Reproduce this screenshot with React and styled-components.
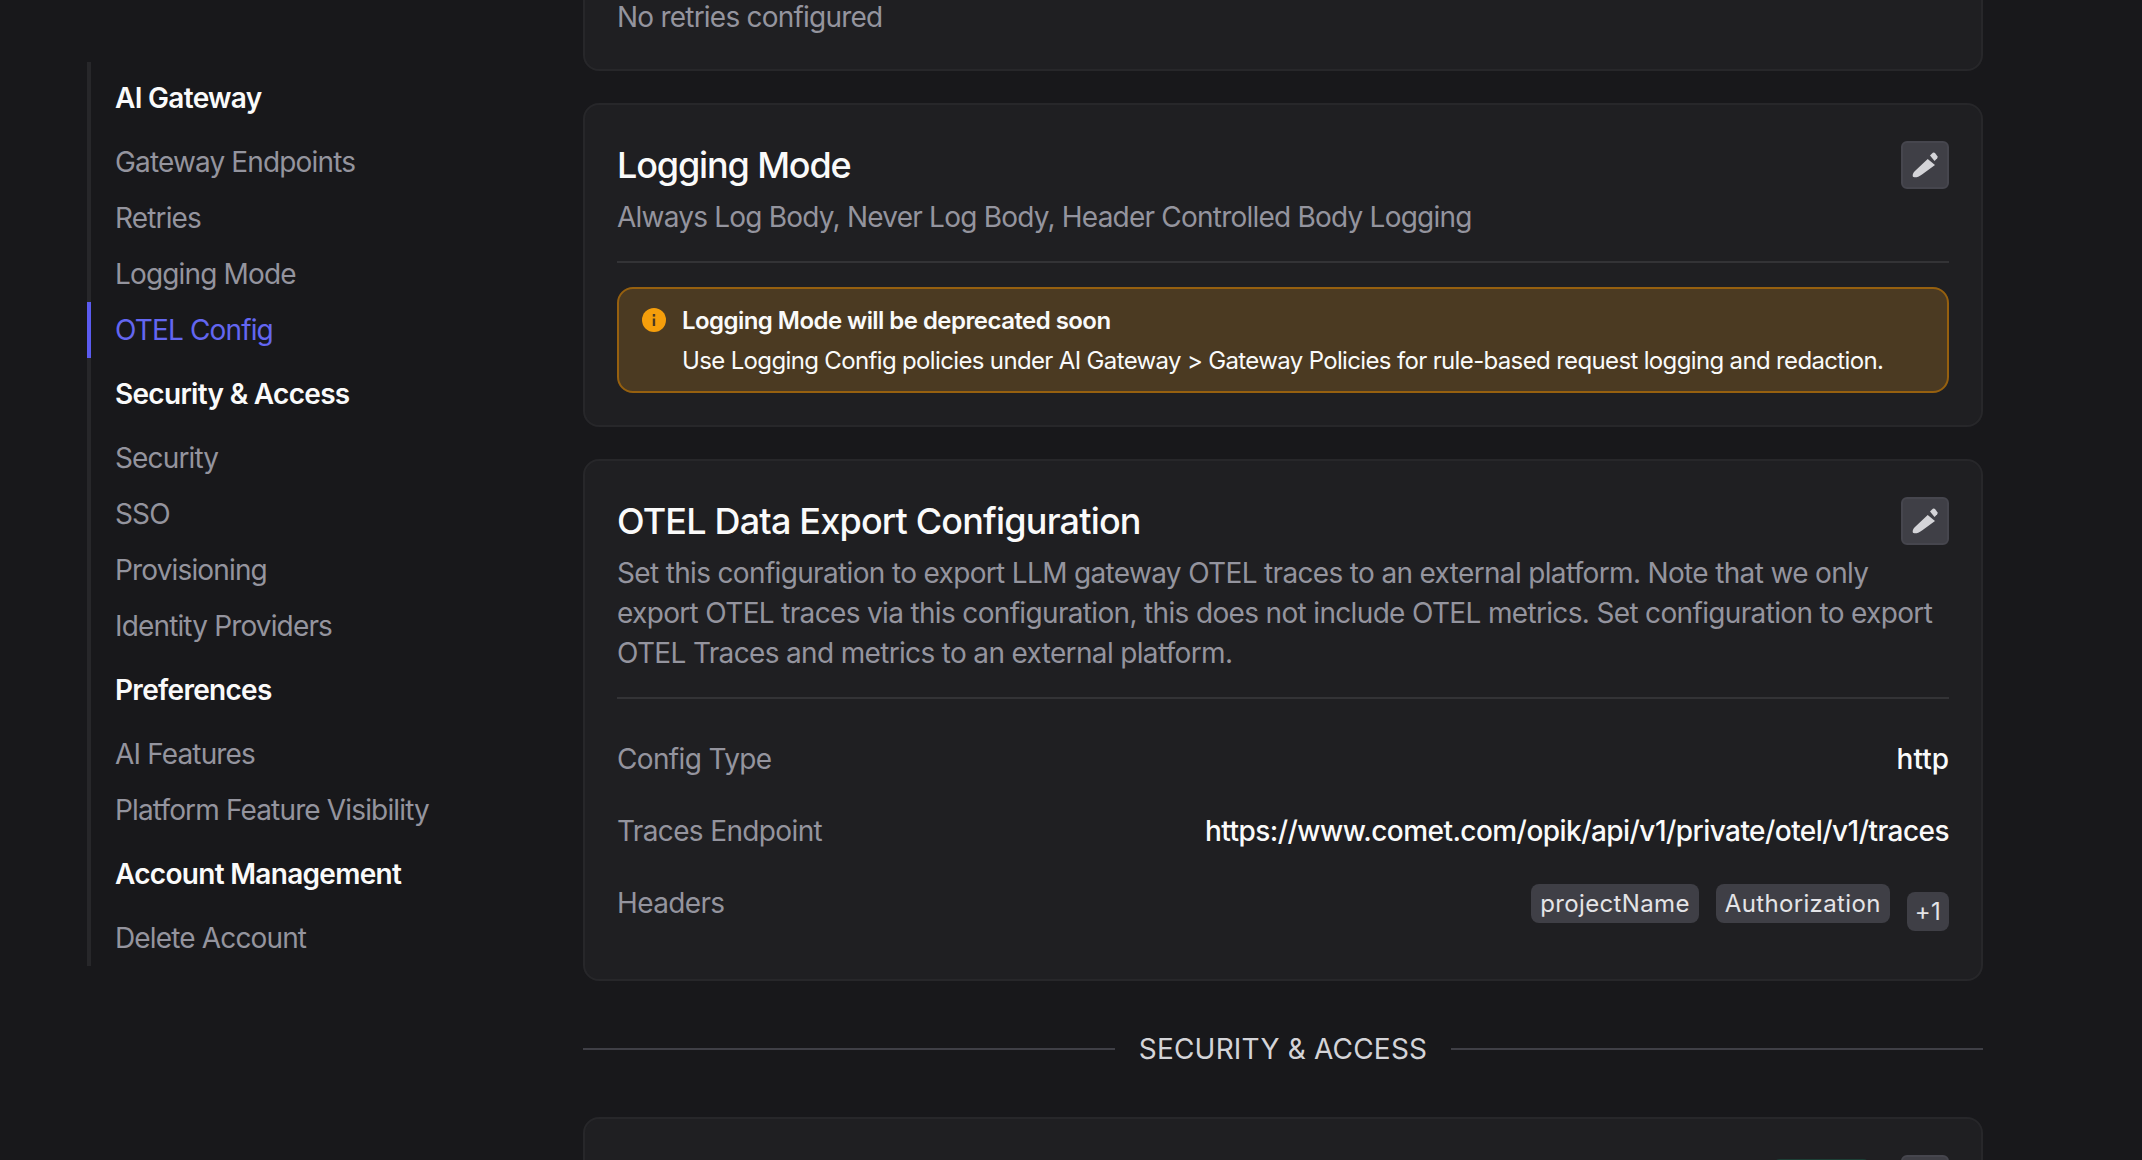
import styled, { createGlobalStyle } from "styled-components";

const GlobalStyle = createGlobalStyle`
  * {
    box-sizing: border-box;
  }
  html, body {
    margin: 0;
    height: 100%;
    overflow: hidden;
    background-color: #18181b;
  }
  body {
    font-family: Inter, "Noto Sans", sans-serif;
    color: #fafafa;
  }
`;

const Page = styled.div`
  display: flex;
  height: 1160px;
  overflow: hidden;
  padding-left: 87px;
  background-color: #18181b;
`;

const SideNav = styled.nav`
  flex: 0 0 496px;
  margin-top: 62px;
`;

const NavList = styled.div`
  display: flex;
  flex-direction: column;
  width: 420px;
  border-left: 4px solid #27272a;
`;

const NavHeading = styled.div`
  display: flex;
  align-items: center;
  height: 72px;
  padding-left: 24px;
  font-size: 28px;
  font-weight: 600;
  letter-spacing: -0.7px;
  color: #fafafa;
`;

const NavItem = styled.a`
  display: flex;
  align-items: center;
  height: 56px;
  margin-left: -4px;
  padding-left: 24px;
  border-left: 4px solid ${({ $active }) => ($active ? "#5b5bf0" : "transparent")};
  font-size: 28px;
  letter-spacing: -0.85px;
  color: ${({ $active }) => ($active ? "#6366f1" : "#94949e")};
`;

const Content = styled.main`
  flex: 0 0 1400px;
  display: flex;
  flex-direction: column;
  gap: 32px;
`;

const Card = styled.section`
  padding: 36px 32px 32px;
  margin-top: ${({ $offset }) => $offset || "0"};
  background-color: #1f1f22;
  border: 2px solid #27272a;
  border-radius: 16px;
`;

const CardTop = styled.div`
  display: flex;
  justify-content: space-between;
  align-items: flex-start;
`;

const CardTitle = styled.h2`
  margin: 0;
  min-height: 48px;
  display: flex;
  align-items: center;
  font-size: 36px;
  font-weight: 500;
  letter-spacing: ${({ $tight }) => ($tight ? "-1.15px" : "-0.82px")};
  color: #fafafa;
`;

const Description = styled.p`
  margin: 8px 0 0;
  max-width: 1320px;
  font-size: 28px;
  line-height: 40px;
  letter-spacing: ${({ $tight }) => ($tight ? "-0.78px" : "-0.66px")};
  color: #94949e;
`;

const Divider = styled.hr`
  margin: 24px 0 0;
  height: 2px;
  border: none;
  background-color: #333336;
`;

const EditButton = styled.button`
  display: flex;
  flex: 0 0 48px;
  align-items: center;
  justify-content: center;
  width: 48px;
  height: 48px;
  padding: 0;
  background-color: #3f3f46;
  border: 2px solid #46464e;
  border-radius: 6px;
  color: #d4d4d8;
`;

const Alert = styled.div`
  display: flex;
  gap: 16px;
  margin-top: 24px;
  padding: 12px 23px 10px;
  background-color: #4b3a22;
  border: 2px solid #96600f;
  border-radius: 16px;
  font-size: 24px;
  line-height: 40px;
  letter-spacing: -0.65px;
  color: #fafafa;
`;

const AlertIcon = styled.svg`
  flex: 0 0 24px;
  width: 24px;
  height: 24px;
  margin-top: 7px;
`;

const AlertTitle = styled.div`
  font-weight: 600;
  letter-spacing: -0.55px;
`;

const InfoRows = styled.div`
  display: flex;
  flex-direction: column;
  margin: 24px 0 8px;
`;

const InfoRow = styled.div`
  display: flex;
  justify-content: space-between;
  align-items: center;
  height: 72px;
`;

const InfoLabel = styled.span`
  font-size: 28px;
  letter-spacing: -0.64px;
  color: #94949e;
`;

const InfoValue = styled.span`
  font-size: 28px;
  font-weight: 500;
  letter-spacing: ${({ $tight }) => ($tight ? "-0.55px" : "0")};
  color: #fafafa;
`;

const Tags = styled.div`
  display: flex;
  align-items: flex-start;
  gap: 17px;
  margin-top: 8px;
`;

const Tag = styled.span`
  display: flex;
  align-items: center;
  height: 39px;
  margin-top: ${({ $low }) => ($low ? "8px" : "0")};
  padding: ${({ $low }) => ($low ? "0 8px" : "0 9px")};
  background-color: #3f3f46;
  border-radius: 8px;
  font-size: 24px;
  letter-spacing: 0.35px;
  color: #e4e4e7;
`;

const SectionLabel = styled.div`
  display: flex;
  align-items: center;
  gap: 24px;
  margin: 19px 0;
  font-size: 28px;
  letter-spacing: 0.2px;
  color: #d4d4d8;
  &::before,
  &::after {
    content: "";
    flex: 1;
    height: 2px;
    background-color: #3f3f46;
  }
`;

const StatusBadge = styled.span`
  display: block;
  width: 99px;
  height: 40px;
  margin: 4px 30px 0 auto;
  background-color: #1c3f36;
  border-radius: 8px;
`;

const PencilIcon = () => (
  <svg width="44" height="44" viewBox="2 2 44 44" fill="currentColor">
    <path d="M26.7 18 34 24 21 33.5c-3 2.2-5.500 3-7.500 2.800-1.500-.1-1.900-.9-1.800-2.300.3-2 1.300-3 2.800-4.500Z" />
    <path d="m29 14.500 2.800-2.700q1.200-.8 2.200.2l2.400 3.200q.6 1.100-.2 2L33.500 20Z" />
  </svg>
);

const InfoIcon = () => (
  <AlertIcon viewBox="0 0 24 24">
    <circle cx="12" cy="12" r="12" fill="#f59e0b" />
    <rect x="10.8" y="10.5" width="2.4" height="7.5" fill="#4b3a22" />
    <rect x="10.8" y="6" width="2.4" height="2.6" fill="#4b3a22" />
  </AlertIcon>
);

const nav = [
  { title: "AI Gateway", items: ["Gateway Endpoints", "Retries", "Logging Mode", "OTEL Config"] },
  { title: "Security & Access", items: ["Security", "SSO", "Provisioning", "Identity Providers"] },
  { title: "Preferences", items: ["AI Features", "Platform Feature Visibility"] },
  { title: "Account Management", items: ["Delete Account"] },
];

function App() {
  return (
    <>
      <GlobalStyle />
      <Page>
        <SideNav>
          <NavList>
            {nav.map((group) => (
              <div key={group.title}>
                <NavHeading>{group.title}</NavHeading>
                {group.items.map((item) => (
                  <NavItem key={item} $active={item === "OTEL Config"}>
                    {item}
                  </NavItem>
                ))}
              </div>
            ))}
          </NavList>
        </SideNav>
        <Content>
          {/* page is scrolled, the top of this card is cut off */}
          <Card $offset="-49px">
            <Description $tight>No retries configured</Description>
          </Card>
          <Card>
            <CardTop>
              <CardTitle $tight>Logging Mode</CardTitle>
              <EditButton>
                <PencilIcon />
              </EditButton>
            </CardTop>
            <Description $tight>Always Log Body, Never Log Body, Header Controlled Body Logging</Description>
            <Divider />
            <Alert>
              <InfoIcon />
              <div>
                <AlertTitle>Logging Mode will be deprecated soon</AlertTitle>
                <div>
                  Use Logging Config policies under AI Gateway &gt; Gateway Policies for rule-based request logging and redaction.
                </div>
              </div>
            </Alert>
          </Card>
          <Card>
            <CardTop>
              <CardTitle>OTEL Data Export Configuration</CardTitle>
              <EditButton>
                <PencilIcon />
              </EditButton>
            </CardTop>
            <Description>
              Set this configuration to export LLM gateway OTEL traces to an external platform. Note that we only export OTEL traces via this configuration, this does not include OTEL metrics. Set configuration to export OTEL Traces and metrics to an external platform.
            </Description>
            <Divider />
            <InfoRows>
              <InfoRow>
                <InfoLabel>Config Type</InfoLabel>
                <InfoValue>http</InfoValue>
              </InfoRow>
              <InfoRow>
                <InfoLabel>Traces Endpoint</InfoLabel>
                <InfoValue $tight>https://www.comet.com/opik/api/v1/private/otel/v1/traces</InfoValue>
              </InfoRow>
              <InfoRow>
                <InfoLabel>Headers</InfoLabel>
                <Tags>
                  <Tag>projectName</Tag>
                  <Tag>Authorization</Tag>
                  <Tag $low>+1</Tag>
                </Tags>
              </InfoRow>
            </InfoRows>
          </Card>
          <SectionLabel>SECURITY &amp; ACCESS</SectionLabel>
          <Card>
            <CardTop>
              <StatusBadge />
              <EditButton>
                <PencilIcon />
              </EditButton>
            </CardTop>
          </Card>
        </Content>
      </Page>
    </>
  );
}

export default App;
